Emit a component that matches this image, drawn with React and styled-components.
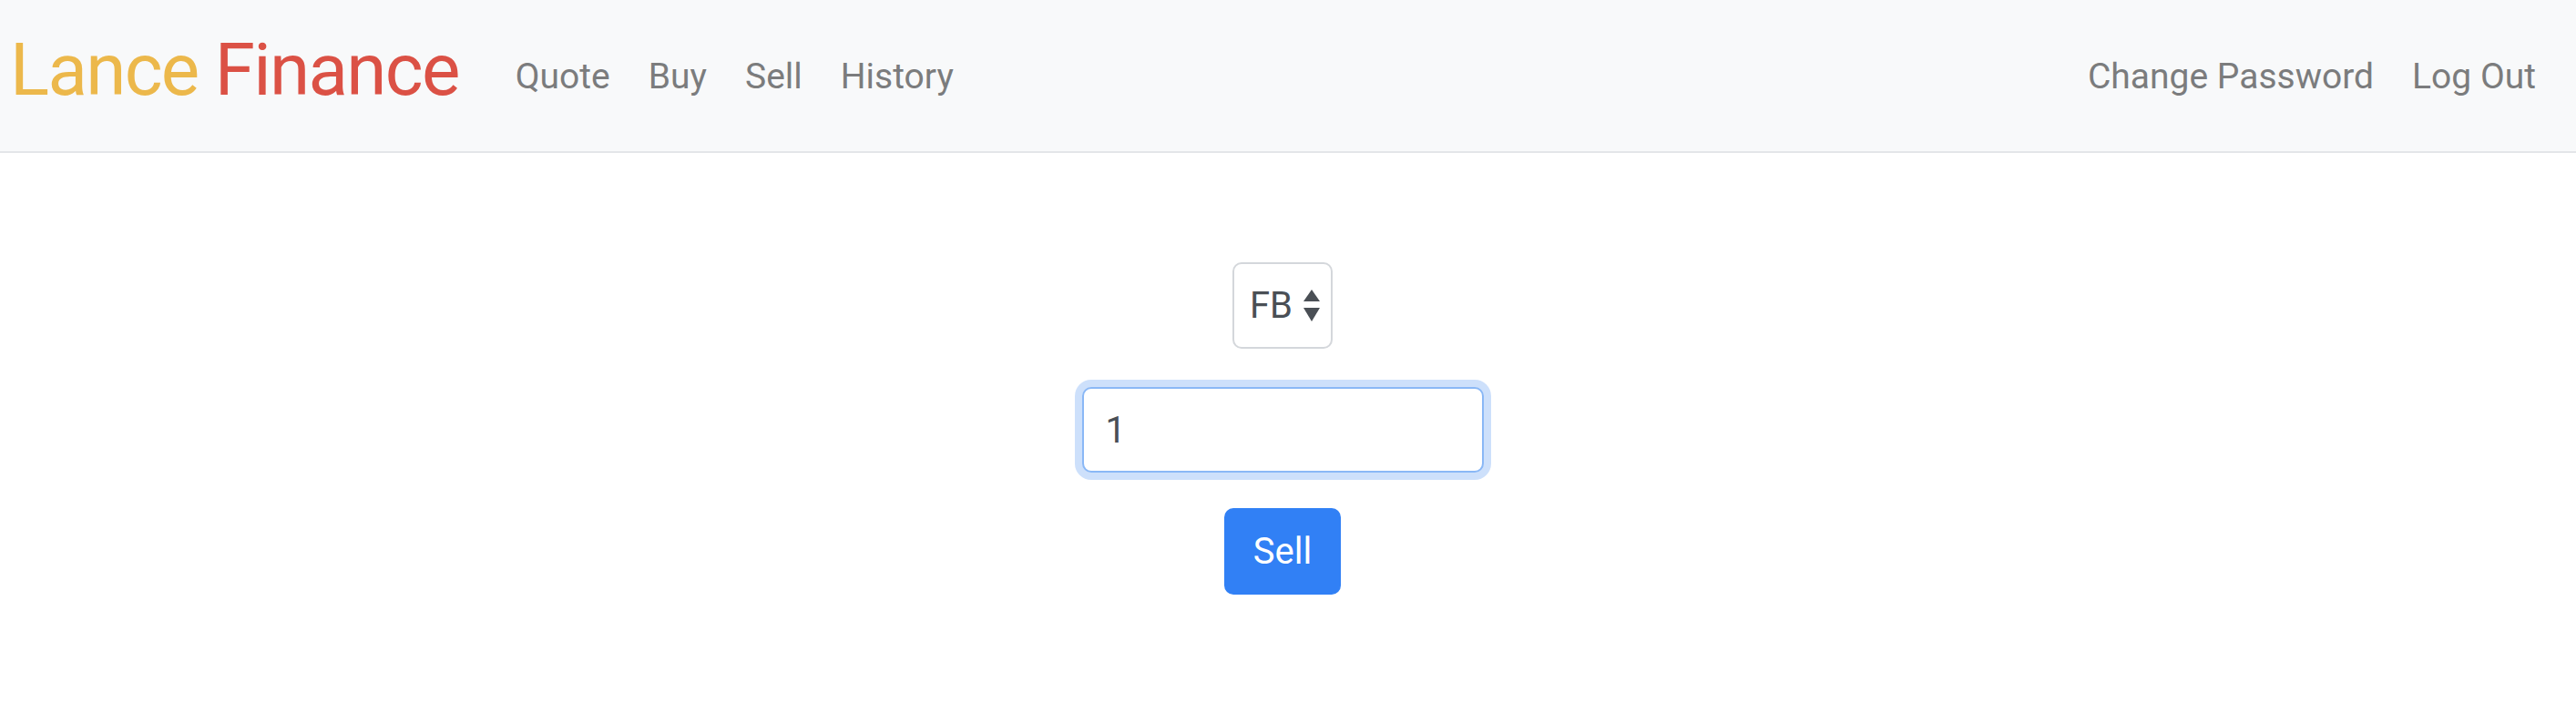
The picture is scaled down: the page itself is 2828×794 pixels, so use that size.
import React from "react";
import styled, { createGlobalStyle } from "styled-components";

const Global = createGlobalStyle`
  html, body { margin: 0; padding: 0; background: #ffffff; }
  body { font-family: Roboto, "Liberation Sans", Arial, sans-serif; }
  * { box-sizing: border-box; }
`;

const Nav = styled.nav`
  display: flex;
  align-items: flex-start;
  height: 168px;
  padding: 0 23px 0 11px;
  background: #f8f9fa;
  border-bottom: 2px solid #e4e6e9;
`;

const Brand = styled.a`
  display: block;
  margin-top: 37px;
  margin-right: 41px;
  font-size: 80px;
  line-height: 80px;
  letter-spacing: -1.7px;
  white-space: nowrap;
  text-decoration: none;
`;

const BrandPart = styled.span`
  color: ${(p) => p.$color};
`;

const Links = styled.ul`
  display: flex;
  list-style: none;
  margin: 65px 0 0 0;
  padding: 0;
  ${(p) => (p.$right ? "margin-left: auto;" : "")}
`;

const NavLink = styled.a`
  display: block;
  padding: 0 21px;
  font-size: 39px;
  line-height: 39px;
  color: #7b7c7d;
  text-decoration: none;
  white-space: nowrap;
`;

const Main = styled.main`
  display: flex;
  flex-direction: column;
  align-items: center;
  padding: 120px 12px 0 0;
`;

const Form = styled.form`
  display: flex;
  flex-direction: column;
  align-items: center;
`;

const Group = styled.div`
  margin-bottom: ${(p) => p.$gap}px;
  display: flex;
  justify-content: center;
`;

const SelectBox = styled.label`
  display: inline-flex;
  align-items: center;
  height: 95px;
  width: 110px;
  padding: 0 9px 0 17px;
  border: 2.5px solid #d4d7db;
  border-radius: 10px;
  background: #fff;
  gap: 12px;
`;

const Select = styled.select`
  appearance: none;
  -webkit-appearance: none;
  border: none;
  outline: none;
  background: transparent;
  padding: 0;
  margin: 0;
  font-family: Roboto, "Liberation Sans", Arial, sans-serif;
  font-size: 40px;
  line-height: 40px;
  height: 40px;
  color: #4a4f55;
  width: 47px;
`;

const Input = styled.input`
  width: 441px;
  height: 94px;
  padding: 0 24px;
  border: 2.5px solid #8ab8f6;
  border-radius: 10px;
  box-shadow: 0 0 0 8px #cde0fb;
  outline: none;
  font-family: Roboto, "Liberation Sans", Arial, sans-serif;
  font-size: 40px;
  line-height: 40px;
  color: #4a4f55;
  background: #fff;
  -moz-appearance: textfield;
  &::-webkit-outer-spin-button,
  &::-webkit-inner-spin-button {
    -webkit-appearance: none;
    margin: 0;
  }
`;

const Button = styled.button`
  width: 128px;
  height: 95px;
  padding: 0;
  border: none;
  border-radius: 10px;
  background: #3180f5;
  color: #ffffff;
  font-family: Roboto, "Liberation Sans", Arial, sans-serif;
  font-size: 40px;
  line-height: 40px;
  cursor: pointer;
`;

const Arrows = () => (
  <svg width="18" height="35" viewBox="0 0 18 35" aria-hidden="true">
    <polygon points="9,0 18,13 0,13" fill="#4a4f55" />
    <polygon points="0,20 18,20 9,35" fill="#4a4f55" />
  </svg>
);

export default function App() {
  return (
    <>
      <Global />
      <Nav>
        <Brand href="#">
          <BrandPart $color="#ecb84b">Lance</BrandPart>{" "}
          <BrandPart $color="#db5145">Finance</BrandPart>
        </Brand>
        <Links>
          <li><NavLink href="#">Quote</NavLink></li>
          <li><NavLink href="#">Buy</NavLink></li>
          <li><NavLink href="#">Sell</NavLink></li>
          <li><NavLink href="#">History</NavLink></li>
        </Links>
        <Links $right>
          <li><NavLink href="#">Change Password</NavLink></li>
          <li><NavLink href="#">Log Out</NavLink></li>
        </Links>
      </Nav>
      <Main>
        <Form onSubmit={(e) => e.preventDefault()}>
          <Group $gap={42}>
            <SelectBox>
              <Select name="symbol" defaultValue="FB">
                <option value="FB">FB</option>
              </Select>
              <Arrows />
            </SelectBox>
          </Group>
          <Group $gap={39}>
            <Input type="number" name="shares" min="1" defaultValue="1" autoComplete="off" />
          </Group>
          <Button type="submit">Sell</Button>
        </Form>
      </Main>
    </>
  );
}
